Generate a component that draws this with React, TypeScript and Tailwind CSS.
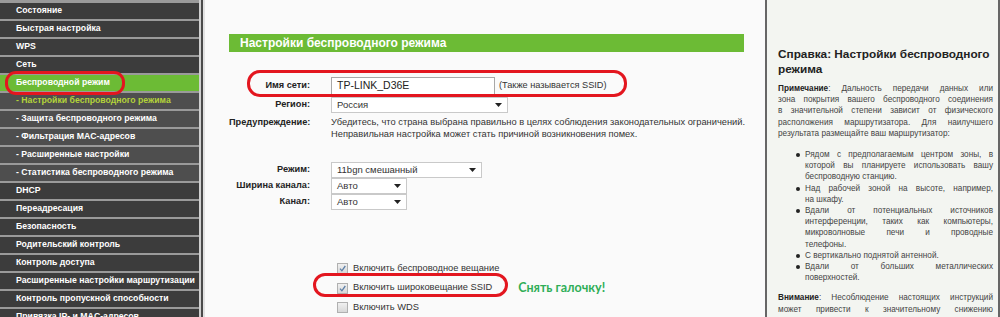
import React from "react";

type Item = { label: string; kind?: "active" | "sub" | "current" };

const menu: Item[] = [
  { label: "Состояние" },
  { label: "Быстрая настройка" },
  { label: "WPS" },
  { label: "Сеть" },
  { label: "Беспроводной режим", kind: "active" },
  { label: "- Настройки беспроводного режима", kind: "current" },
  { label: "- Защита беспроводного режима", kind: "sub" },
  { label: "- Фильтрация MAC-адресов", kind: "sub" },
  { label: "- Расширенные настройки", kind: "sub" },
  { label: "- Статистика беспроводного режима", kind: "sub" },
  { label: "DHCP" },
  { label: "Переадресация" },
  { label: "Безопасность" },
  { label: "Родительский контроль" },
  { label: "Контроль доступа" },
  { label: "Расширенные настройки маршрутизации" },
  { label: "Контроль пропускной способности" },
  { label: "Привязка IP- и MAC-адресов" },
];

function Select({ value, width }: { value: string; width: string }) {
  return (
    <div
      className={`flex h-[16px] items-center justify-between border border-[#c9c9c9] bg-white pl-[5px] pr-[5px] text-[9.5px] text-[#333] ${width}`}
    >
      <span>{value}</span>
      <svg width="7" height="4" viewBox="0 0 7 4">
        <path d="M0 0h7L3.5 4z" fill="#222" />
      </svg>
    </div>
  );
}

function Check({ checked }: { checked: boolean }) {
  return (
    <span className="flex h-[11px] w-[11px] shrink-0 items-center justify-center border border-[#b0b0b0] bg-gradient-to-b from-[#f0f0f0] to-[#d8d8d8]">
      {checked && (
        <svg width="9" height="9" viewBox="0 0 9 9">
          <path d="M2 4.6l1.9 2.2L7.3 2" fill="none" stroke="#5b7ea6" strokeWidth="1.3" />
        </svg>
      )}
    </span>
  );
}

function Row({ label, children, className = "" }: { label: string; children: React.ReactNode; className?: string }) {
  return (
    <div className={`flex items-center gap-[21px] ${className}`}>
      <div className="w-[81px] shrink-0 text-right text-[9.2px] font-bold text-[#222]">{label}</div>
      {children}
    </div>
  );
}

const justify = "whitespace-nowrap text-justify [text-align-last:justify]";

export default function App() {
  return (
    <div className="relative flex h-[317px] w-[1000px] overflow-hidden font-['Liberation_Sans',Arial,sans-serif]">
      {/* menu */}
      <nav className="flex w-[199px] shrink-0 flex-col gap-[2px] bg-[#9a9a9a] pt-[3px]">
        {menu.map((m) => (
          <div
            key={m.label}
            className={
              "flex h-[16px] shrink-0 items-center pl-[16px] text-[8.7px] font-bold whitespace-nowrap " +
              (m.kind === "active"
                ? "bg-[#6cbb35] text-white"
                : m.kind === "current"
                  ? "bg-[#4e4e4e] text-[#b3d23a]"
                  : m.kind === "sub"
                    ? "bg-[#4e4e4e] text-white"
                    : "bg-[#3c3c3c] text-white")
            }
          >
            {m.label}
          </div>
        ))}
      </nav>
      <div className="w-[2px] shrink-0 bg-[#cfcfcf]" />
      <div className="w-[2px] shrink-0 bg-[#4a4a4a]" />

      {/* settings */}
      <main className="flex w-[562px] shrink-0 flex-col border-l-2 border-[#e2e2e2] bg-[#fafafa] pt-[34px] pl-[24px] pr-[21px]">
        <div className="flex h-[18px] items-center bg-[#6cbb35] pl-[11px] text-[12px] font-bold text-white">
          Настройки беспроводного режима
        </div>
        <div className="mt-[19px] h-px bg-[#5f8f7f]" />

        <Row label="Имя сети:" className="mt-[6px] h-[18px]">
          <div className="flex items-center gap-[4px]">
            <div className="flex h-[18px] w-[164px] items-center border border-[#a8a8a8] bg-white pl-[5px] text-[10.5px] text-[#222]">
              TP-LINK_D36E
            </div>
            <span className="text-[9.2px] text-[#333]">(Также называется SSID)</span>
          </div>
        </Row>
        <Row label="Регион:" className="mt-[2px] h-[16px]">
          <Select value="Россия" width="w-[177px]" />
        </Row>
        <div className="mt-[3px] flex gap-[21px]">
          <div className="w-[81px] shrink-0 text-left text-[9.2px] leading-[12px] font-bold text-[#222]">Предупреждение:</div>
          <div className="text-[9.3px] leading-[12px] whitespace-nowrap text-[#333]">
            Убедитесь, что страна выбрана правильно в целях соблюдения законодательных ограничений.
            <br />
            Неправильная настройка может стать причиной возникновения помех.
          </div>
        </div>

        <Row label="Режим:" className="mt-[22px] h-[19px]">
          <Select value="11bgn смешанный" width="w-[151px]" />
        </Row>
        <Row label="Ширина канала:" className="h-[19px]">
          <Select value="Авто" width="w-[76px]" />
        </Row>
        <Row label="Канал:" className="h-[19px]">
          <Select value="Авто" width="w-[76px]" />
        </Row>

        <div className="mt-[49px] flex flex-col pl-[108px] text-[9.3px] text-[#333]">
          <div className="flex h-[19.5px] items-center gap-[5px]">
            <Check checked />
            <span>Включить беспроводное вещание</span>
          </div>
          <div className="flex h-[19.5px] items-center gap-[5px]">
            <Check checked />
            <span>Включить широковещание SSID</span>
            <span className="ml-[21px] font-['Lato',sans-serif] text-[12.5px] font-bold text-[#2fae57]">Снять галочку!</span>
          </div>
          <div className="flex h-[19.5px] items-center gap-[5px]">
            <Check checked={false} />
            <span>Включить WDS</span>
          </div>
        </div>
      </main>

      {/* help */}
      <aside className="flex w-[235px] shrink-0 flex-col border-x-2 border-[#666] bg-[#f3f5f1] pt-[47px] pl-[11px] pr-[5px] text-[8.2px] leading-[11.2px] text-[#444]">
        <h2 className="text-[11.8px] leading-[15px] font-bold whitespace-nowrap text-[#222]">
          Справка: Настройки беспроводного
          <br />
          режима
        </h2>
        <div className="mt-[6px]">
          <div className={justify}>
            <b className="text-[#222]">Примечание</b>: Дальность передачи данных или
          </div>
          <div className={justify}>зона покрытия вашего беспроводного соединения</div>
          <div className={justify}>в значительной степени зависит от физического</div>
          <div className={justify}>расположения маршрутизатора. Для наилучшего</div>
          <div>результата размещайте ваш маршрутизатор:</div>
        </div>
        <ul className="mt-[10px] flex flex-col pl-[27px]">
          {[
            [["Рядом с предполагаемым центром зоны, в", "которой вы планируете использовать вашу"], "беспроводную станцию."],
            [["Над рабочей зоной на высоте, например,"], "на шкафу."],
            [
              ["Вдали от потенциальных источников", "интерференции, таких как компьютеры,", "микроволновые печи и проводные"],
              "телефоны.",
            ],
            [[], "С вертикально поднятой антенной."],
            [["Вдали от больших металлических"], "поверхностей."],
          ].map(([lines, last], i) => (
            <li key={i} className="relative">
              <span className="absolute top-[4px] left-[-9px] h-[4px] w-[4px] rounded-full bg-[#222]" />
              {(lines as string[]).map((l) => (
                <div key={l} className={justify}>
                  {l}
                </div>
              ))}
              <div>{last as string}</div>
            </li>
          ))}
        </ul>
        <div className="mt-[9px]">
          <div className={justify}>
            <b className="text-[#222]">Внимание</b>: Несоблюдение настоящих инструкций
          </div>
          <div className={justify}>может привести к значительному снижению</div>
        </div>
      </aside>

      {/* red marks */}
      <div className="absolute top-[71px] left-[5px] h-[24px] w-[120px] rounded-[11px] border-[3px] border-[#e3161f]" />
      <div className="absolute top-[70px] left-[247px] h-[27px] w-[380px] rounded-[13px] border-[3px] border-[#e3161f]" />
      <div className="absolute top-[273px] left-[313px] h-[24px] w-[195px] rounded-[12px] border-[3px] border-[#e3161f]" />
    </div>
  );
}
